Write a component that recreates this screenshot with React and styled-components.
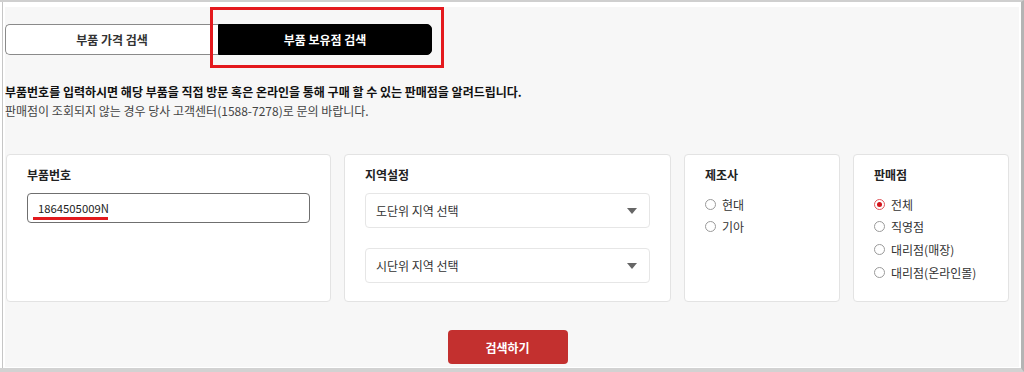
import React from "react";
import styled, { createGlobalStyle } from "styled-components";

const Global = createGlobalStyle`
  html, body { margin: 0; padding: 0; background: #fff; }
  body { font-family: "Noto Sans CJK KR", "Noto Sans", sans-serif; color: #222; }
  * { box-sizing: border-box; }
`;

const Frame = styled.div`
  width: 1024px;
  height: 372px;
  background: #fff;
  border-top: 2px solid #cfcfcf;
  border-right: 3px solid #b4b4b4;
  border-bottom: 4px solid #d2d2d2;
  padding-left: 2px;
  display: flex;
`;

const Inner = styled.div`
  flex: 1;
  border-left: 1px solid #c6c6c6;
  padding: 5px 2px 1px 2px;
  display: flex;
`;

const Content = styled.div`
  flex: 1;
  background: #f7f7f7;
  padding: 17px 10px 0 0;
  display: flex;
  flex-direction: column;
`;

const TabsWrap = styled.div`
  position: relative;
  width: 427px;
`;

const Tabs = styled.div`
  display: flex;
  height: 31px;
`;

const Tab = styled.div`
  flex: 1;
  display: flex;
  align-items: center;
  justify-content: center;
  font-size: 12px;
  font-weight: ${(p) => (p.$active ? 700 : 600)};
  background: ${(p) => (p.$active ? "#000" : "#fff")};
  color: ${(p) => (p.$active ? "#fff" : "#333")};
  border: 1px solid ${(p) => (p.$active ? "#000" : "#8a8a8a")};
  border-right: ${(p) => (p.$active ? "1px solid #000" : "none")};
  border-radius: ${(p) => (p.$active ? "0 5px 5px 0" : "5px 0 0 5px")};
`;

const Highlight = styled.div`
  position: absolute;
  left: 205px;
  top: -17px;
  width: 234px;
  height: 61px;
  border: 3px solid #e4191e;
  pointer-events: none;
`;

const Desc = styled.div`
  margin-top: 27px;
  font-size: 12px;
  line-height: 19px;
`;

const DescStrong = styled.p`
  margin: 0;
  font-weight: 700;
  color: #111;
`;

const DescNormal = styled.p`
  margin: 0;
  color: #444;
`;

const Cards = styled.div`
  margin-top: 34px;
  margin-left: 1px;
  display: grid;
  grid-template-columns: 325px 327px 156px 156px;
  gap: 13px;
  height: 148px;
`;

const Card = styled.div`
  background: #fff;
  border: 1px solid #e3e3e3;
  border-radius: 4px;
  padding: 11px 20px 0 20px;
  display: flex;
  flex-direction: column;
`;

const Label = styled.div`
  font-size: 12px;
  font-weight: 700;
  line-height: 18px;
  color: #222;
  margin-bottom: 9px;
`;

const InputBox = styled.div`
  position: relative;
  height: 30px;
  border: 1px solid #6f6f6f;
  border-radius: 4px;
  display: flex;
  align-items: center;
  padding-left: 10px;
  font-size: 11.3px;
  color: #222;
`;

const Underline = styled.span`
  position: absolute;
  left: 5px;
  top: 23px;
  width: 75px;
  height: 3px;
  background: #e2191d;
`;

const SelectGroup = styled.div`
  display: flex;
  flex-direction: column;
  gap: 20px;
`;

const Select = styled.div`
  height: 35px;
  border: 1px solid #e6e6e6;
  border-radius: 4px;
  display: flex;
  align-items: center;
  justify-content: space-between;
  padding: 0 12px 0 10px;
  font-size: 12px;
  color: #333;
`;

const Arrow = styled.span`
  width: 0;
  height: 0;
  border-left: 5px solid transparent;
  border-right: 5px solid transparent;
  border-top: 6px solid #666;
`;

const RadioList = styled.div`
  display: flex;
  flex-direction: column;
`;

const RadioRow = styled.div`
  display: flex;
  align-items: center;
  height: 22.6px;
  font-size: 12px;
  color: #333;
  gap: 6px;
`;

const Circle = styled.span`
  width: 11px;
  height: 11px;
  border-radius: 50%;
  border: 1px solid ${(p) => (p.$checked ? "#e0555a" : "#9a9a9a")};
  background: #fff;
  display: flex;
  align-items: center;
  justify-content: center;
  flex: none;
  &::after {
    content: "";
    width: 5px;
    height: 5px;
    border-radius: 50%;
    background: ${(p) => (p.$checked ? "#d3141c" : "transparent")};
  }
`;

const ButtonRow = styled.div`
  margin-top: 28px;
  margin-left: 1px;
  width: 1003px;
  display: flex;
  justify-content: center;
`;

const SearchButton = styled.button`
  width: 120px;
  height: 34px;
  border: none;
  border-radius: 4px;
  background: #c3302f;
  color: #fff;
  font-family: inherit;
  font-size: 12px;
  font-weight: 700;
`;

const Radio = ({ label, checked }) => (
  <RadioRow>
    <Circle $checked={checked} />
    {label}
  </RadioRow>
);

export default function App() {
  return (
    <>
      <Global />
      <Frame>
        <Inner>
          <Content>
            <TabsWrap>
              <Tabs>
                <Tab>부품 가격 검색</Tab>
                <Tab $active>부품 보유점 검색</Tab>
              </Tabs>
              <Highlight />
            </TabsWrap>
            <Desc>
              <DescStrong>
                부품번호를 입력하시면 해당 부품을 직접 방문 혹은 온라인을 통해 구매 할 수 있는 판매점을 알려드립니다.
              </DescStrong>
              <DescNormal>판매점이 조회되지 않는 경우 당사 고객센터(1588-7278)로 문의 바랍니다.</DescNormal>
            </Desc>
            <Cards>
              <Card>
                <Label>부품번호</Label>
                <InputBox>
                  1864505009N
                  <Underline />
                </InputBox>
              </Card>
              <Card>
                <Label>지역설정</Label>
                <SelectGroup>
                  <Select>
                    도단위 지역 선택
                    <Arrow />
                  </Select>
                  <Select>
                    시단위 지역 선택
                    <Arrow />
                  </Select>
                </SelectGroup>
              </Card>
              <Card>
                <Label>제조사</Label>
                <RadioList>
                  <Radio label="현대" />
                  <Radio label="기아" />
                </RadioList>
              </Card>
              <Card>
                <Label>판매점</Label>
                <RadioList>
                  <Radio label="전체" checked />
                  <Radio label="직영점" />
                  <Radio label="대리점(매장)" />
                  <Radio label="대리점(온라인몰)" />
                </RadioList>
              </Card>
            </Cards>
            <ButtonRow>
              <SearchButton>검색하기</SearchButton>
            </ButtonRow>
          </Content>
        </Inner>
      </Frame>
    </>
  );
}
